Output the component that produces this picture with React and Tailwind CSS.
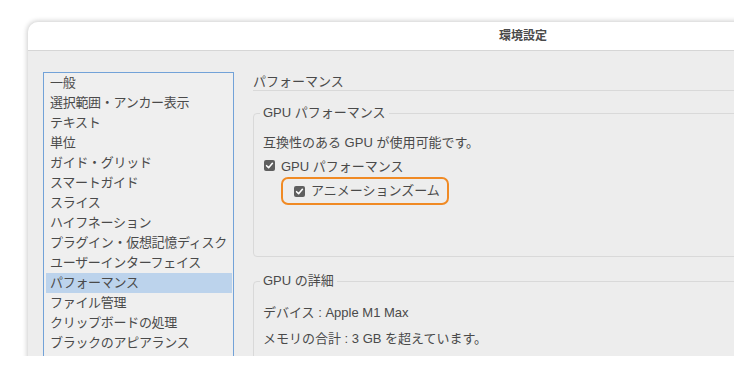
import React from "react";

const items = [
  "一般",
  "選択範囲・アンカー表示",
  "テキスト",
  "単位",
  "ガイド・グリッド",
  "スマートガイド",
  "スライス",
  "ハイフネーション",
  "プラグイン・仮想記憶ディスク",
  "ユーザーインターフェイス",
  "パフォーマンス",
  "ファイル管理",
  "クリップボードの処理",
  "ブラックのアピアランス",
];

function Check() {
  return (
    <span className="inline-flex w-[11px] h-[11px] rounded-[2px] bg-[#5f5f5f] items-center justify-center shrink-0">
      <svg width="11" height="11" viewBox="0 0 11 11">
        <path d="M2.6 5.7 L4.6 7.7 L8.4 3.3" fill="none" stroke="#fff" strokeWidth="1.6" strokeLinecap="round" strokeLinejoin="round" />
      </svg>
    </span>
  );
}

export default function App() {
  return (
    <div className="w-[750px] h-[369px] bg-white font-['Liberation_Sans','Noto_Sans_CJK_JP',sans-serif] text-[#4a4a4a]">
      <div className="w-[734px] h-[356px] overflow-hidden">
        <div className="ml-[28px] mt-[22px] w-[990px] h-[400px] rounded-t-[10px] bg-[#ededed] shadow-[0_0_5px_1px_rgba(0,0,0,0.2)] overflow-hidden">
          <div className="h-[29px] bg-white border-b border-[#d6d6d6] flex items-center justify-center">
            <span className="text-[12px] font-bold text-[#4a4a4a] leading-none">環境設定</span>
          </div>
          <div className="flex pt-[21px] pl-[15px]">
            <div className="w-[191px] h-[320px] border border-[#72a2d8] bg-[#efefef] shrink-0">
              {items.map((t, i) => (
                <div
                  key={i}
                  className={
                    "h-[20px] leading-[20px] text-[13px] tracking-[-0.3px] pl-[4px] ml-[2px] mr-[1px] whitespace-nowrap " +
                    (i === 10 ? "bg-[#bcd3ec]" : "")
                  }
                >
                  {t}
                </div>
              ))}
            </div>
            <div className="flex-1 ml-[19px] flex flex-col">
              <div className="h-[18px] leading-[20px] text-[13px] border-b border-[#d9d9d9] box-content">
                パフォーマンス
              </div>
              <fieldset className="mt-[14px] border border-[#d9d9d9] rounded-[4px] pl-[6px] h-[152px]">
                <legend className="px-[3px] text-[13px] leading-[16px]">GPU パフォーマンス</legend>
                <div className="pl-[3px] pt-[13px] text-[13px]">
                  <div className="h-[18px] leading-[18px]">互換性のある GPU が使用可能です。</div>
                  <div className="h-[18px] leading-[18px] mt-[6px] flex items-center">
                    <span className="ml-[1px]"><Check /></span>
                    <span className="ml-[6px] leading-[20px]">GPU パフォーマンス</span>
                  </div>
                  <div className="mt-[1px] ml-[18px] w-[168px] h-[28px] border-2 border-[#f08a24] rounded-[7px] flex items-center pl-[11px]">
                    <Check />
                    <span className="ml-[6px] leading-[20px]">アニメーションズーム</span>
                  </div>
                </div>
              </fieldset>
              <fieldset className="mt-[15px] border border-[#d9d9d9] rounded-[4px] pl-[6px] h-[120px]">
                <legend className="px-[3px] text-[13px] leading-[18px]">GPU の詳細</legend>
                <div className="pl-[3px] pt-[14px] text-[13px]">
                  <div className="h-[18px] leading-[18px]">デバイス : Apple M1 Max</div>
                  <div className="h-[18px] leading-[18px] mt-[8px]">メモリの合計 : 3 GB を超えています。</div>
                </div>
              </fieldset>
            </div>
          </div>
        </div>
      </div>
    </div>
  );
}
